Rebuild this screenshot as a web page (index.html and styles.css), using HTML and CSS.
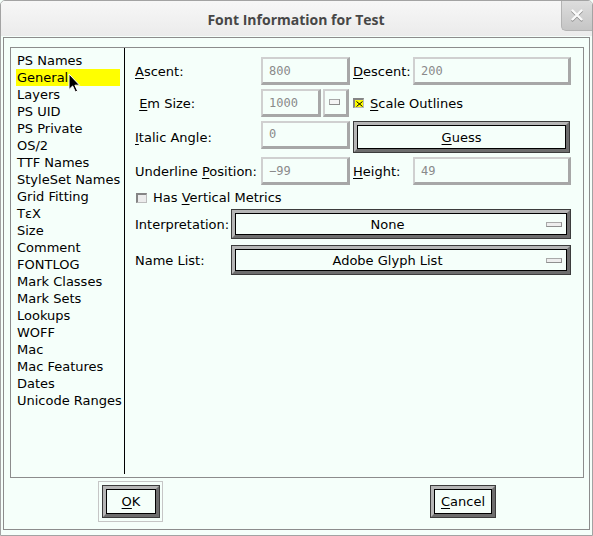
FILE: index.html
```html
<!DOCTYPE html>
<html>
<head>
<meta charset="utf-8">
<title>Font Information for Test</title>
<link rel="stylesheet" href="styles.css">
</head>
<body>
<div class="window">
  <div class="titlebar">
    <div class="tb-spacer"></div>
    <div class="title">Font Information for Test</div>
    <div class="close">
      <svg width="12" height="12" viewBox="0 0 12 12"><path d="M1.5 1.5 L10.5 10.5 M10.5 1.5 L1.5 10.5" stroke="#fafafa" stroke-width="2.4" stroke-linecap="round"/></svg>
    </div>
  </div>
  <div class="body">
    <div class="frame">
      <div class="tabbox">
        <ul class="tablist">
          <li>PS Names</li>
          <li class="sel">General</li>
          <li>Layers</li>
          <li>PS UID</li>
          <li>PS Private</li>
          <li>OS/2</li>
          <li>TTF Names</li>
          <li>StyleSet Names</li>
          <li>Grid Fitting</li>
          <li>TεX</li>
          <li>Size</li>
          <li>Comment</li>
          <li>FONTLOG</li>
          <li>Mark Classes</li>
          <li>Mark Sets</li>
          <li>Lookups</li>
          <li>WOFF</li>
          <li>Mac</li>
          <li>Mac Features</li>
          <li>Dates</li>
          <li>Unicode Ranges</li>
        </ul>
        <div class="sep"></div>
        <div class="pane">
          <div class="row r28">
            <span class="lbl"><u>A</u>scent:</span>
            <span class="field w89">800</span>
            <span class="lbl2"><u>D</u>escent:</span>
            <span class="field w158">200</span>
          </div>
          <div class="row r28">
            <span class="lbl">&nbsp;<u>E</u>m Size:</span>
            <span class="field w60">1000</span>
            <span class="smallbtn"><span class="mini"></span></span>
            <span class="check on"><svg width="7" height="6" viewBox="0 0 7 6"><path d="M0.5 0.5 L6.5 5.5 M6.5 0.5 L0.5 5.5" stroke="#000" stroke-width="1"/></svg></span>
            <span class="clbl"><u>S</u>cale Outlines</span>
          </div>
          <div class="row r32">
            <span class="lbl"><u>I</u>talic Angle:</span>
            <span class="field w89 top">0</span>
            <span class="bev guess"><u>G</u>uess</span>
          </div>
          <div class="row r28">
            <span class="lbl">Underline <u>P</u>osition:</span>
            <span class="field w89">−99</span>
            <span class="lbl2"><u>H</u>eight:</span>
            <span class="field w158">49</span>
          </div>
          <div class="row r16">
            <span class="check off"></span>
            <span class="clbl">Has <u>V</u>ertical Metrics</span>
          </div>
          <div class="row r30">
            <span class="lbl short">Interpretation:</span>
            <span class="bev drop"><span class="dtext">None</span><span class="dicon"></span></span>
          </div>
          <div class="row r30 gap2">
            <span class="lbl short">Name List:</span>
            <span class="bev drop"><span class="dtext">Adobe Glyph List</span><span class="dicon"></span></span>
          </div>
        </div>
      </div>
      <div class="actions">
        <div class="ring"><span class="bev btn ok"><u>O</u>K</span></div>
        <span class="bev btn cancel"><u>C</u>ancel</span>
      </div>
    </div>
  </div>
  <svg class="cursor" width="13" height="20" viewBox="0 0 13 20"><path d="M1 1 L1 16.5 L4.6 13 L7.4 19 L9.6 18 L6.9 12.2 L11.6 12.2 Z" fill="#000" stroke="#fff" stroke-width="1" stroke-linejoin="round"/></svg>
</div>
</body>
</html>
```

FILE: styles.css
```css
* { box-sizing: border-box; }

html, body {
  margin: 0;
  padding: 0;
  background: #f5fffa;
}

body {
  font-family: "DejaVu Sans", "Liberation Sans", sans-serif;
  font-size: 13px;
  color: #000;
}

u {
  text-decoration: underline;
  text-underline-offset: 2px;
  text-decoration-thickness: 1px;
}

.window {
  position: relative;
  width: 593px;
  height: 536px;
  border: 1px solid #a3a3a3;
  border-radius: 5px 5px 0 0;
  background: #f5fffa;
  overflow: hidden;
  display: flex;
  flex-direction: column;
}

.titlebar {
  height: 35px;
  flex: none;
  display: grid;
  grid-template-columns: 30px 1fr 31px;
  background: linear-gradient(#f7f7f7, #ebebeb);
}

.title {
  align-self: center;
  text-align: center;
  font-family: "Open Sans", "DejaVu Sans", sans-serif;
  font-weight: 700;
  font-size: 14px;
  color: #474747;
  padding-top: 1px;
}

.close {
  height: 31px;
  margin-top: -1px;
  display: flex;
  align-items: center;
  justify-content: center;
  background: linear-gradient(#dedede, #c5c5c5);
  border-left: 1px solid #b3b3b3;
  border-bottom: 1px solid #b3b3b3;
  border-radius: 0 0 0 5px;
}

.close svg {
  filter: drop-shadow(0 1px 0 #8a8a8a);
}

.body {
  flex: 1;
  display: flex;
  padding: 1px 2px 5px 2px;
}

.frame {
  flex: 1;
  display: flex;
  flex-direction: column;
  border: 1px solid #8c8c8c;
  padding: 9px 5px 0 6px;
}

.tabbox {
  height: 431px;
  flex: none;
  display: flex;
  border: 1px solid #8c8c8c;
}

.tablist {
  list-style: none;
  margin: 0;
  padding: 4px 0 0 0;
  width: 113px;
  flex: none;
}

.tablist li {
  height: 17px;
  line-height: 17px;
  margin-left: 5px;
  padding-left: 1px;
  width: 104px;
  white-space: nowrap;
}

.tablist li.sel {
  background: #ffff00;
}

.sep {
  width: 1px;
  flex: none;
  background: #000;
  margin-bottom: 3px;
}

.pane {
  flex: 1;
  display: flex;
  flex-direction: column;
  gap: 4px;
  padding: 9px 0 0 10px;
}

.row {
  display: flex;
  align-items: center;
  white-space: nowrap;
}

.r28 { height: 28px; }
.r32 { height: 32px; }
.r30 { height: 30px; }
.r16 { height: 16px; }
.gap2 { margin-top: 2px; }

.lbl {
  width: 126px;
  flex: none;
}

.lbl.short {
  width: 96px;
}

.lbl2 {
  width: 60px;
  margin-left: 3px;
  flex: none;
}

.field {
  height: 28px;
  flex: none;
  display: flex;
  align-items: center;
  border-style: solid;
  border-width: 2px 3px 3px 2px;
  border-color: #d0d0d0 #a7a7a7 #a7a7a7 #d0d0d0;
  padding-left: 6px;
  font-family: "DejaVu Sans Mono", monospace;
  font-size: 12px;
  color: #8a8a8a;
}

.field.top {
  align-self: flex-start;
  align-items: flex-start;
  padding-top: 4px;
}

.w89 { width: 89px; }
.w158 { width: 158px; }
.w60 { width: 60px; }

.smallbtn {
  width: 26px;
  height: 28px;
  margin-left: 2px;
  flex: none;
  display: flex;
  align-items: center;
  justify-content: center;
  border-style: solid;
  border-width: 2px 3px 3px 2px;
  border-color: #d0d0d0 #a7a7a7 #a7a7a7 #d0d0d0;
}

.mini {
  width: 11px;
  height: 6px;
  margin-left: -3px;
  margin-top: -1px;
  border: 1px solid #8c8c8c;
  border-top-color: #a8a8a8;
  border-left-color: #a8a8a8;
  background: #f4f4f4;
}

.check {
  width: 11px;
  height: 10px;
  flex: none;
  display: flex;
  align-items: center;
  justify-content: center;
  border-style: solid;
  border-width: 2px 1px 1px 2px;
  border-color: #858585 #bdbdbd #bdbdbd #858585;
}

.check.on {
  margin-left: 4px;
  background: #ffff00;
}

.check.off {
  margin-left: 1px;
  margin-top: 2px;
  background: #ececec;
}

.clbl {
  margin-left: 6px;
}

.bev {
  display: flex;
  align-items: center;
  justify-content: center;
  flex: none;
  border: 3px solid;
  border-color: #b6b6b6 #6d6d6d #6d6d6d #b6b6b6;
  box-shadow: 0 0 0 1px #3c3c3c, inset 0 0 0 1px #000;
  background: #f5fffa;
}

.guess {
  width: 215px;
  height: 30px;
  margin-left: 4px;
}

.drop {
  width: 338px;
  height: 28px;
  margin-left: 1px;
  justify-content: flex-start;
}

.dtext {
  flex: 1;
  text-align: center;
  padding-left: 2px;
}

.dicon {
  width: 16px;
  height: 5px;
  margin-right: 5px;
  margin-left: 8px;
  border: 1px solid #8f8f8f;
  border-top-color: #a9a9a9;
  border-left-color: #a9a9a9;
  background: #eeeeee;
}

.actions {
  flex: 1;
  display: flex;
  justify-content: space-between;
  align-items: flex-start;
  padding: 3px 89px 0 88px;
}

.ring {
  width: 65px;
  height: 41px;
  border: 1px solid #c6c6c6;
  padding: 4px 3px 4px 4px;
  display: flex;
}

.btn {
  height: 31px;
}

.ok {
  width: 56px;
}

.cancel {
  width: 64px;
  margin-top: 5px;
}

.cursor {
  position: absolute;
  left: 67px;
  top: 72px;
}
```
